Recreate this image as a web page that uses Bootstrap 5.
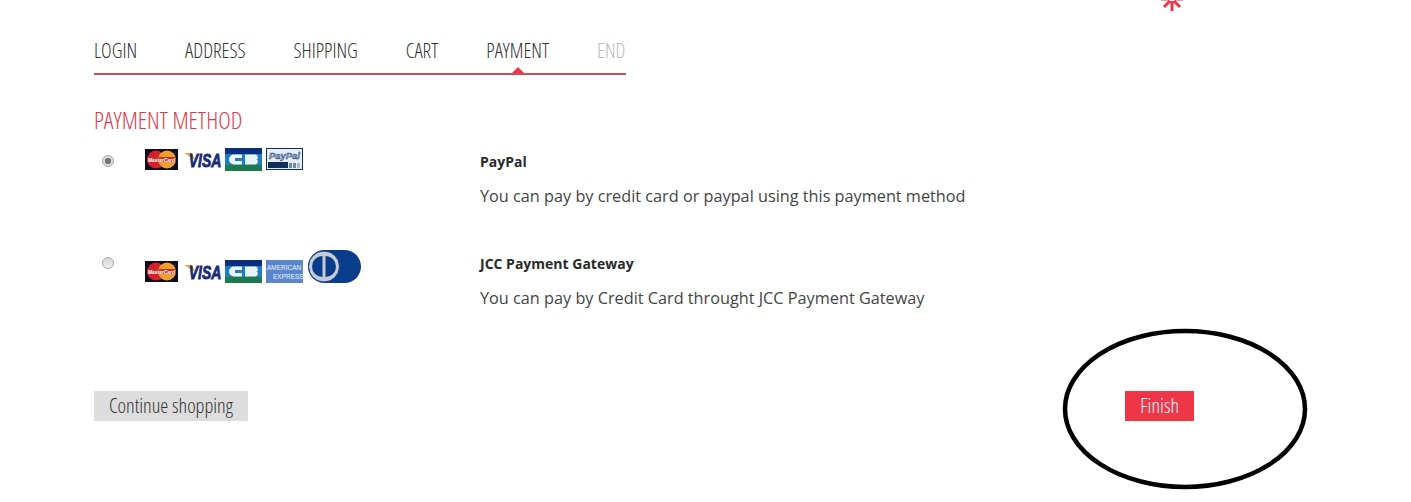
<!DOCTYPE html>
<html lang="en">
<head>
    <meta charset="UTF-8">
    <meta name="viewport" content="width=device-width, initial-scale=1.0">
    <title>Checkout - Payment</title>
    <link href="https://cdn.jsdelivr.net/npm/bootstrap@5.3.3/dist/css/bootstrap.min.css" rel="stylesheet">
    <style>
        body {
            font-family: "Open Sans", "Liberation Sans", sans-serif;
            color: #333;
            background: #fff;
            height: 502px;
            overflow: hidden;
        }
        .cond {
            font-family: "Liberation Sans Narrow", "Open Sans", "Liberation Sans", sans-serif;
            font-stretch: 75%;
            font-weight: 300;
        }
        .checkout-wrap { padding: 38px 0 0 94px; width: 1200px; }
        .step-bar {
            width: 532px;
            height: 37px;
            border-bottom: 2px solid #d04a5a;
            gap: 48px;
            font-size: 20.200px;
            line-height: 25px;
        }
        .step-bar a { color: #333; text-decoration: none; }
        .step-bar a.step-off { color: #bbb; }
        .step-bar a.step-on { position: relative; display: block; height: 35px; }
        .step-bar a.step-on::after {
            content: "";
            position: absolute;
            left: 50%;
            top: 29px;
            margin-left: -6px;
            border: 6px solid transparent;
            border-top: 0;
            border-bottom-color: #ee3648;
        }
        .method-title { color: #dc3a48; font-size: 23.800px; line-height: 30px; margin: 30px 0 13px; font-weight: 300; }
        .pay-row { display: grid; grid-template-columns: 51px 335px 1fr; height: 102px; }
        .pay-radio {
            appearance: none;
            width: 12px;
            height: 12px;
            margin: 7px 0 0 8px;
            border: 1px solid #aaa;
            border-radius: 50%;
            background: linear-gradient(#d8d8d8, #f0f0f0);
        }
        .pay-radio:checked { background: radial-gradient(circle, #777 0 3px, #ddd 3.500px); }
        .card-logos { display: flex; align-items: flex-end; gap: 4px; align-self: start; }
        .card-logos svg { display: block; }
        .card-logos text { font-family: "Liberation Sans", sans-serif; }
        .pay-name { font-size: 14px; font-weight: 700; line-height: 18px; margin: 5px 0 0; color: #2a2a2a; }
        .pay-text { font-size: 16.250px; line-height: 24px; margin: 13px 0 0; color: #444; }
        .btn-row { margin-top: 39px; width: 1100px; }
        .btn-row .btn { border-radius: 0; border: 0; height: 30px; padding: 0 15px; font-size: 20.200px; line-height: 28px; }
        .btn-grey { background: #ddd; color: #333; }
        .btn-finish { background: #ee3648; color: #fff; }
        .top-mark { position: absolute; left: 1160px; top: -13px; }
        .circle-mark { position: absolute; left: 1060px; top: 326px; pointer-events: none; }
    </style>
</head>
<body>
    <svg class="top-mark" width="24" height="24" viewBox="-12 -12 24 24" stroke="#ee3648" stroke-width="3">
        <path d="M0 2v10M2 2l6 6M-2 2l-6 6M3 0h8M-3 0h-8"/>
    </svg>

    <div class="checkout-wrap">
        <nav class="step-bar d-flex cond">
            <a href="#">LOGIN</a>
            <a href="#">ADDRESS</a>
            <a href="#">SHIPPING</a>
            <a href="#">CART</a>
            <a href="#" class="step-on">PAYMENT</a>
            <a href="#" class="step-off">END</a>
        </nav>

        <h2 class="method-title cond">PAYMENT METHOD</h2>

        <div class="pay-row">
            <input class="pay-radio" type="radio" name="method" checked>
            <div class="card-logos">
                <svg width="35" height="23" viewBox="0 0 35 23">
                    <rect x="0" y="1" width="33" height="21" fill="#0d0d24"/>
                    <circle cx="11" cy="11.500" r="9" fill="#d8202c"/>
                    <circle cx="22" cy="11.500" r="9" fill="#f0a030"/>
                    <rect x="2" y="9" width="29" height="5" fill="#c8302c"/>
                    <text x="16.500" y="13.500" font-size="5" font-weight="700" font-style="italic" fill="#fff" text-anchor="middle" textLength="27" lengthAdjust="spacingAndGlyphs">MasterCard</text>
                </svg>
                <svg width="37" height="23" viewBox="0 0 37 23">
                    <path d="M0 5h8l3 7z" fill="#e8ab3c"/>
                    <text x="21" y="14" transform="scale(1 1.360)" font-size="14" font-weight="700" font-style="italic" fill="#1a2a78" stroke="#1a2a78" stroke-width=".6" text-anchor="middle">VISA</text>
                </svg>
                <svg width="37" height="23" viewBox="0 0 37 23">
                    <rect width="37" height="23" fill="#0b2f7c"/>
                    <rect y="6" width="37" height="11" fill="#1f7cc0"/>
                    <rect y="17" width="37" height="6" fill="#1e7a4a"/>
                    <path d="M17 6.500h-8a5 5 0 0 0 0 10h8v-3.500h-7v-3h7z" fill="#eaf4f8"/>
                    <path d="M20 6.500h10c3.500 0 3.500 5 1.500 5 2 0 2 5-1.500 5h-10z" fill="#eaf4f8"/>
                </svg>
                <svg width="37" height="23" viewBox="0 0 37 23">
                    <rect x=".5" y=".5" width="36" height="21" fill="#e8eef6" stroke="#10305c"/>
                    <text x="18.500" y="11" font-size="8.500" font-weight="700" font-style="italic" fill="#8fa6c4" stroke="#1f3f74" stroke-width=".4" text-anchor="middle" textLength="31" lengthAdjust="spacingAndGlyphs">PayPal</text>
                    <rect x="2" y="14" width="20" height="6" fill="#10305c"/>
                    <rect x="23" y="15" width="3" height="5" fill="#6d85a8"/>
                    <rect x="27" y="15" width="3" height="5" fill="#6d85a8"/>
                    <rect x="31" y="15" width="3" height="5" fill="#a9b8cc"/>
                </svg>
            </div>
            <div>
                <p class="pay-name">PayPal</p>
                <p class="pay-text">You can pay by credit card or paypal using this payment method</p>
            </div>
        </div>

        <div class="pay-row">
            <input class="pay-radio" type="radio" name="method">
            <div class="card-logos">
                <svg width="35" height="23" viewBox="0 0 35 23">
                    <rect x="0" y="1" width="33" height="21" fill="#0d0d24"/>
                    <circle cx="11" cy="11.500" r="9" fill="#d8202c"/>
                    <circle cx="22" cy="11.500" r="9" fill="#f0a030"/>
                    <rect x="2" y="9" width="29" height="5" fill="#c8302c"/>
                    <text x="16.500" y="13.500" font-size="5" font-weight="700" font-style="italic" fill="#fff" text-anchor="middle" textLength="27" lengthAdjust="spacingAndGlyphs">MasterCard</text>
                </svg>
                <svg width="37" height="23" viewBox="0 0 37 23">
                    <path d="M0 5h8l3 7z" fill="#e8ab3c"/>
                    <text x="21" y="14" transform="scale(1 1.360)" font-size="14" font-weight="700" font-style="italic" fill="#1a2a78" stroke="#1a2a78" stroke-width=".6" text-anchor="middle">VISA</text>
                </svg>
                <svg width="37" height="23" viewBox="0 0 37 23">
                    <rect width="37" height="23" fill="#0b2f7c"/>
                    <rect y="6" width="37" height="11" fill="#1f7cc0"/>
                    <rect y="17" width="37" height="6" fill="#1e7a4a"/>
                    <path d="M17 6.500h-8a5 5 0 0 0 0 10h8v-3.500h-7v-3h7z" fill="#eaf4f8"/>
                    <path d="M20 6.500h10c3.500 0 3.500 5 1.500 5 2 0 2 5-1.500 5h-10z" fill="#eaf4f8"/>
                </svg>
                <svg width="37" height="23" viewBox="0 0 37 23">
                    <rect width="37" height="23" fill="#5a86cc"/>
                    <text x="1" y="10" font-size="6.500" fill="#eef3fb">AMERICAN</text>
                    <text x="7" y="19" font-size="6.500" fill="#eef3fb">EXPRESS</text>
                </svg>
                <svg width="54" height="33" viewBox="0 0 54 33">
                    <rect x="1" y="0" width="53" height="33" rx="16.500" fill="#0a3c8c"/>
                    <circle cx="17" cy="16.500" r="15.500" fill="#c6ccd4" stroke="#0a3c8c"/>
                    <path d="M15.500 6a10.500 10.500 0 0 0 0 21zM18.500 6a10.500 10.500 0 0 1 0 21z" fill="#0a3c8c"/>
                </svg>
            </div>
            <div>
                <p class="pay-name">JCC Payment Gateway</p>
                <p class="pay-text">You can pay by Credit Card throught JCC Payment Gateway</p>
            </div>
        </div>

        <div class="btn-row d-flex justify-content-between">
            <a href="#" class="btn btn-grey cond">Continue shopping</a>
            <a href="#" class="btn btn-finish cond">Finish</a>
        </div>
    </div>

    <svg class="circle-mark" width="252" height="168" viewBox="0 0 252 168">
        <ellipse cx="125" cy="83" rx="120" ry="78" fill="none" stroke="#000" stroke-width="4.500"/>
    </svg>
</body>
</html>
